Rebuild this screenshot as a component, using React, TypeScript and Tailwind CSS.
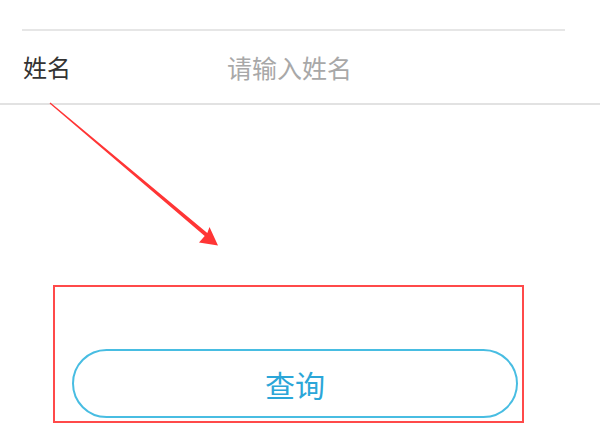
export default function App() {
  return (
    <div
      className="relative w-[600px] h-[441px] overflow-hidden bg-white"
      style={{ fontFamily: '"Noto Sans CJK SC", "Noto Sans", sans-serif' }}
    >
      <div className="pt-[29px]">
        <div className="ml-[22px] mr-[35px] border-t-2 border-[#e6e6e6]" />
        <div className="flex h-[74px] items-center border-b-2 border-[#e2e2e2] pl-[23px]">
          <span className="w-[204px] text-[24px] leading-none text-[#333333]">姓名</span>
          <span className="text-[25px] leading-none text-[#a8a8a8]">请输入姓名</span>
        </div>
      </div>

      <div className="ml-[53px] mt-[180px] flex h-[138px] w-[471px] flex-col justify-end border-2 border-[#ff4a4a] pb-[3px] pl-[17px]">
        <div className="flex h-[69px] w-[446px] items-center justify-center rounded-full border-2 border-[#48bde2]">
          <span className="text-[30px] leading-none text-[#2ba6d8]">查询</span>
        </div>
      </div>

      <svg
        className="pointer-events-none absolute left-0 top-0"
        width="600"
        height="441"
        viewBox="0 0 600 441"
      >
        <polygon
          points="49.6,103.5 204.7,236 199,242.5 218,245.5 209.5,227 207.3,233 50.4,102.5"
          fill="#ff3535"
        />
      </svg>
    </div>
  );
}
